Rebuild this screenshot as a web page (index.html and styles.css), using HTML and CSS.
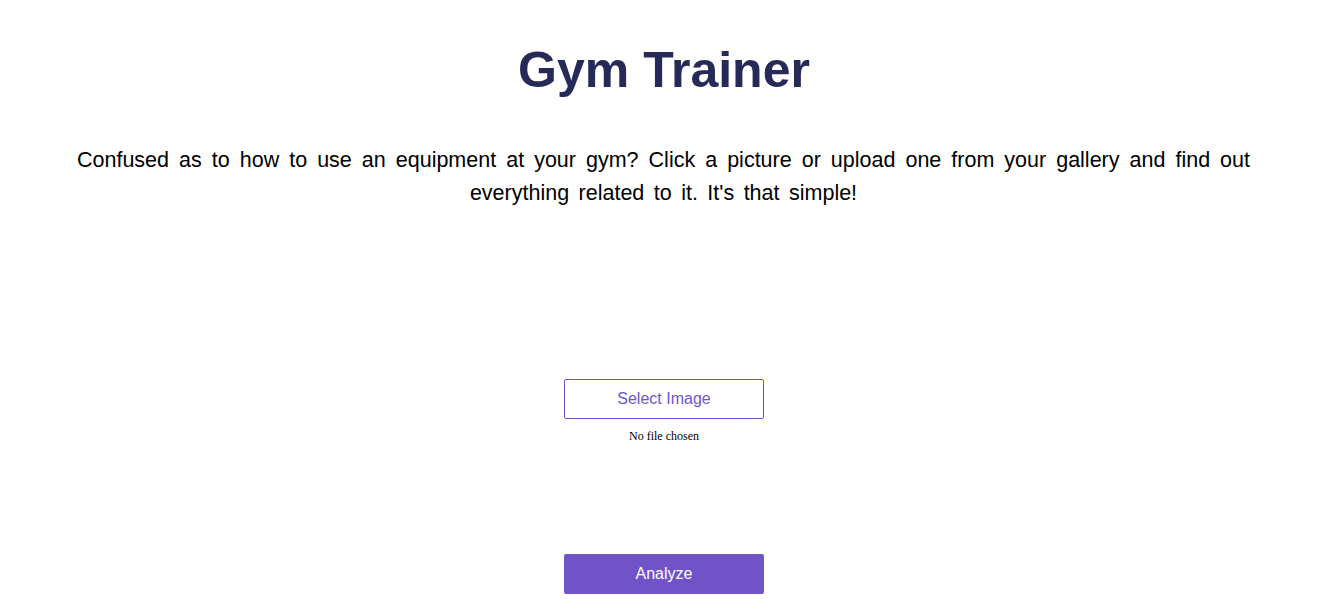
FILE: index.html
```html
<!DOCTYPE html>
<html lang="en">
<head>
<meta charset="utf-8">
<title>Gym Trainer</title>
<link rel="stylesheet" href="styles.css">
</head>
<body>
<main class="page">
  <h1 class="title">Gym Trainer</h1>
  <p class="intro">Confused as to how to use an equipment at your gym? Click a picture or upload one from your gallery and find out everything related to it. It's that simple!</p>
  <div class="upload">
    <label class="select-btn">Select Image</label>
    <span class="file-name">No file chosen</span>
  </div>
  <button class="analyze-btn" type="button">Analyze</button>
</main>
</body>
</html>
```

FILE: styles.css
```css
html, body {
  margin: 0;
  padding: 0;
  background: #ffffff;
}

.page {
  display: flex;
  flex-direction: column;
  align-items: center;
  padding-right: 4px;
  font-family: "Liberation Sans", Arial, sans-serif;
}

.title {
  margin: 42px 0 0;
  font-size: 50px;
  font-weight: 700;
  line-height: 57px;
  color: #252a57;
}

.intro {
  align-self: stretch;
  margin: 45px 0 0;
  padding: 0 78px 0 77px;
  font-size: 21.5px;
  line-height: 33px;
  word-spacing: 3.5px;
  color: #000000;
  text-align: justify;
  text-align-last: center;
}

.upload {
  margin-top: 169px;
  display: flex;
  flex-direction: column;
  align-items: center;
}

.select-btn {
  box-sizing: border-box;
  width: 200px;
  height: 40px;
  display: flex;
  align-items: center;
  justify-content: center;
  border: 1px solid #7153c8;
  border-radius: 2px;
  color: #6b58cc;
  font-size: 16px;
}

.file-name {
  margin-top: 10px;
  font-family: "Liberation Serif", "Times New Roman", serif;
  font-size: 12px;
  line-height: 14px;
  color: #000000;
}

.analyze-btn {
  margin-top: 111px;
  width: 200px;
  height: 40px;
  border: none;
  border-radius: 2px;
  background: #7153c8;
  color: #ffffff;
  font-family: "Liberation Sans", Arial, sans-serif;
  font-size: 16px;
  cursor: pointer;
}
```
